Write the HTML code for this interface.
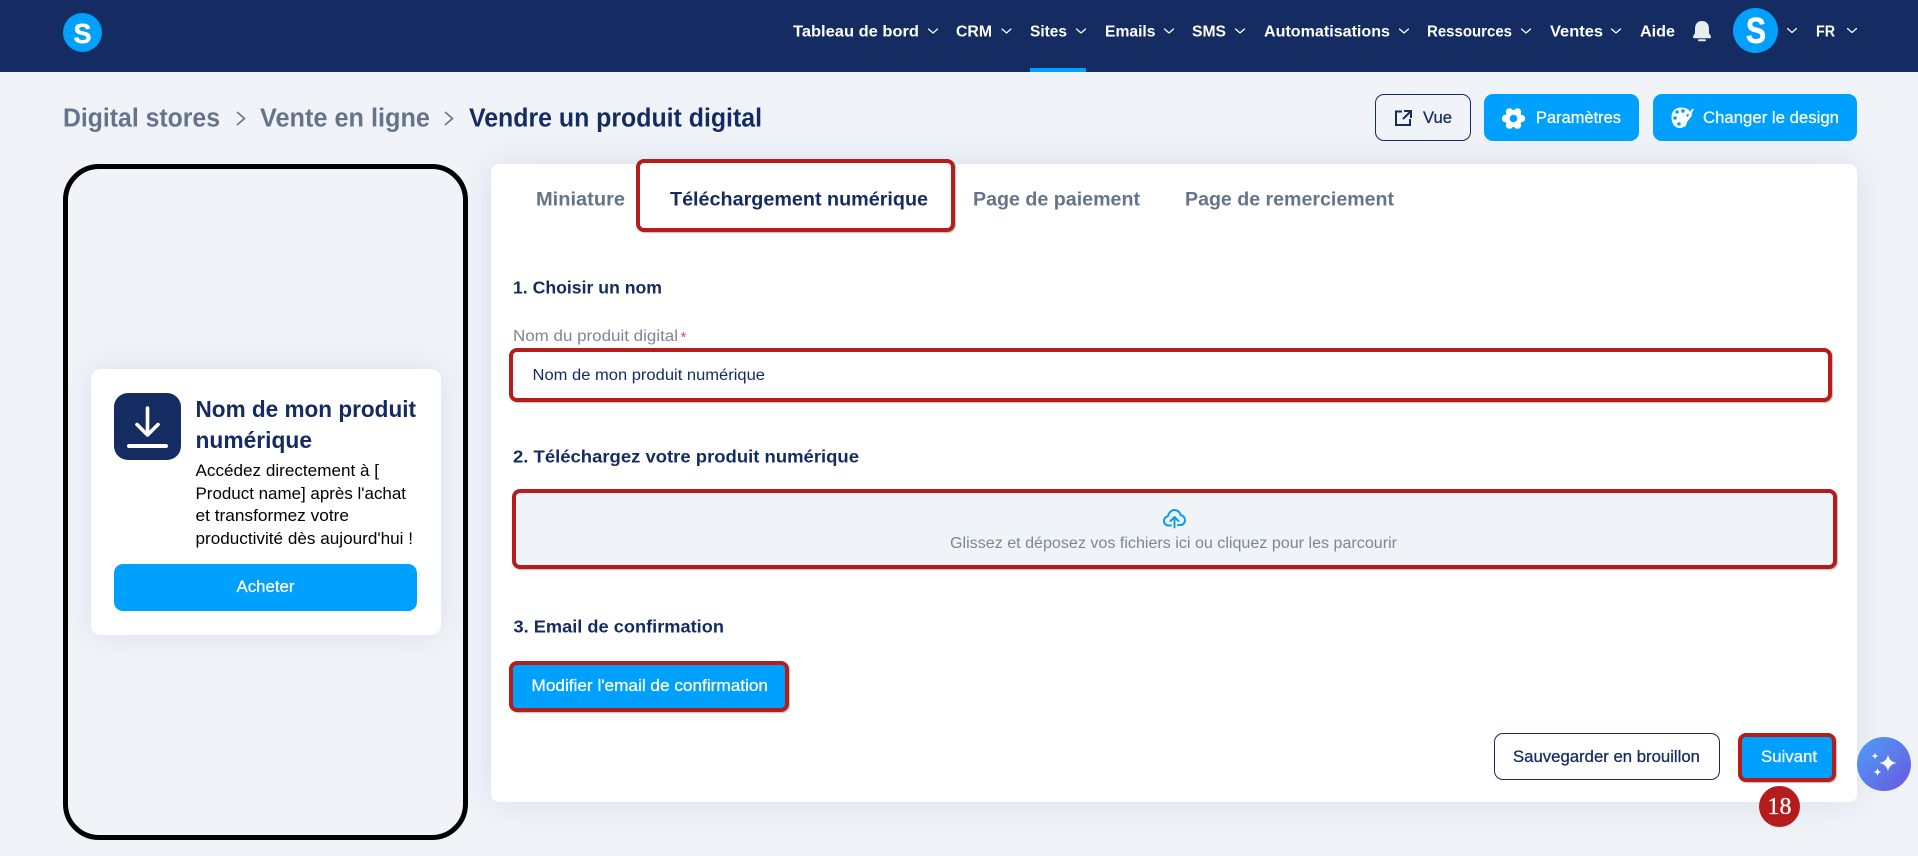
<!DOCTYPE html>
<html lang="fr">
<head>
<meta charset="utf-8">
<title>Vendre un produit digital</title>
<style>
html,body{margin:0;padding:0;width:1918px;height:856px;overflow:hidden;background:#f0f4f9}
body{position:relative;font-family:"Liberation Sans",sans-serif}
.b{position:absolute;box-sizing:border-box}
.red{border:4px solid #b51c1c;border-radius:8px;box-shadow:1px 1px 1px rgba(60,60,60,.35)}
svg.o{position:absolute;left:0;top:0}
text{font-family:"Liberation Sans",sans-serif}
.n{font-size:16px;font-weight:700;fill:#fff}
.t{font-size:19px;font-weight:700;fill:#64748b}
.c{font-size:25.5px;font-weight:700;fill:#64748b}
.h{font-size:17.5px;font-weight:700;fill:#152c62}
.w{font-size:16.5px;fill:#fff;stroke:#fff;stroke-width:.25}
.d{font-size:16.5px;fill:#000}
</style>
</head>
<body>
<div class="b" style="left:0;top:0;width:1918px;height:72px;background:#152c62"></div>
<div class="b" style="left:1030px;top:68px;width:56px;height:4px;background:#00a0ff"></div>
<div class="b" style="left:63px;top:13px;width:39px;height:39px;border-radius:50%;background:#00a0ff"></div>
<div class="b" style="left:1733px;top:8px;width:45px;height:45px;border-radius:50%;background:#00a0ff"></div>

<div class="b" style="left:1375px;top:94px;width:96px;height:47px;border:1px solid #152c62;border-radius:9px"></div>
<div class="b" style="left:1484px;top:94px;width:155px;height:47px;background:#00a0ff;border-radius:9px"></div>
<div class="b" style="left:1653px;top:94px;width:204px;height:47px;background:#00a0ff;border-radius:9px"></div>

<div class="b" style="left:63px;top:164px;width:405px;height:676px;border:5px solid #000;border-radius:36px"></div>
<div class="b" style="left:91px;top:369px;width:350px;height:266px;background:#fff;border-radius:10px;box-shadow:0 0 32px rgba(40,50,80,.1)"></div>
<div class="b" style="left:114px;top:393px;width:67px;height:67px;background:#152c62;border-radius:14px"></div>
<div class="b" style="left:114px;top:564px;width:303px;height:47px;background:#00a0ff;border-radius:9px"></div>

<div class="b" style="left:491px;top:164px;width:1366px;height:638px;background:#fff;border-radius:8px;box-shadow:0 0 36px rgba(40,50,80,.11)"></div>
<div class="b red" style="left:636px;top:159px;width:319px;height:73px;background:#fff"></div>
<div class="b red" style="left:509px;top:348px;width:1323px;height:54px;background:#fff"></div>
<div class="b red" style="left:512px;top:489px;width:1325px;height:80px;background:#f0f4f9"></div>
<div class="b red" style="left:509px;top:661px;width:280px;height:51px;background:#00a0ff"></div>
<div class="b" style="left:1494px;top:733px;width:226px;height:47px;border:1px solid #152c62;border-radius:9px;background:#fff"></div>
<div class="b red" style="left:1738px;top:733px;width:98px;height:49px;background:#00a0ff"></div>
<div class="b" style="left:1758.5px;top:785.5px;width:41px;height:41px;border-radius:50%;background:#b51c1c"></div>
<div class="b" style="left:1857px;top:737px;width:54px;height:54px;border-radius:50%;background:linear-gradient(135deg,#4c9ff5,#6a58e0)"></div>

<svg class="o" width="1918" height="856" viewBox="0 0 1918 856" xmlns="http://www.w3.org/2000/svg">
<!-- logos -->
<text x="73.500" y="43" textLength="18" lengthAdjust="spacingAndGlyphs" style="font-size:28px;font-weight:700" fill="#fff" stroke="#fff" stroke-width=".5">S</text>
<text x="1746" y="43" textLength="20" lengthAdjust="spacingAndGlyphs" style="font-size:36px;font-weight:700" fill="#fff" stroke="#fff" stroke-width=".6">S</text>

<!-- nav -->
<g>
<text class="n" x="793" y="36.500" textLength="126" lengthAdjust="spacingAndGlyphs">Tableau de bord</text>
<text class="n" x="956" y="36.500" textLength="36" lengthAdjust="spacingAndGlyphs">CRM</text>
<text class="n" x="1030" y="36.500" textLength="37" lengthAdjust="spacingAndGlyphs">Sites</text>
<text class="n" x="1105" y="36.500" textLength="50.500" lengthAdjust="spacingAndGlyphs">Emails</text>
<text class="n" x="1192" y="36.500" textLength="34" lengthAdjust="spacingAndGlyphs">SMS</text>
<text class="n" x="1264" y="36.500" textLength="126" lengthAdjust="spacingAndGlyphs">Automatisations</text>
<text class="n" x="1427" y="36.500" textLength="85" lengthAdjust="spacingAndGlyphs">Ressources</text>
<text class="n" x="1550" y="36.500" textLength="53" lengthAdjust="spacingAndGlyphs">Ventes</text>
<text class="n" x="1640" y="36.500" textLength="35" lengthAdjust="spacingAndGlyphs">Aide</text>
<text class="n" x="1816" y="36.500" textLength="19" lengthAdjust="spacingAndGlyphs">FR</text>
</g>
<g fill="none" stroke="#fff" stroke-width="1.200" stroke-linecap="round" stroke-linejoin="round">
<path d="M928.500 29l4.500 4 4.500-4"/><path d="M1002 29l4.500 4 4.500-4"/><path d="M1076.500 29l4.500 4 4.500-4"/>
<path d="M1164.500 29l4.500 4 4.500-4"/><path d="M1235.500 29l4.500 4 4.500-4"/><path d="M1399.500 29l4.500 4 4.500-4"/>
<path d="M1521.500 29l4.500 4 4.500-4"/><path d="M1611.500 29l4.500 4 4.500-4"/><path d="M1787.500 28.500l4.500 4 4.500-4"/>
<path d="M1847.500 28.500l4.500 4 4.500-4"/>
</g>
<path d="M1702 21c-5 0-7 3.500-7 8v3.500c0 1.500-2 3-2 4.500 0 .8.500 1.200 1.200 1.200h15.600c.7 0 1.200-.4 1.200-1.200 0-1.500-2-3-2-4.500V29c0-4.500-2-8-7-8z" fill="#e8ecf0"/>
<rect x="1698" y="39.200" width="8" height="2" rx="1" fill="#e8ecf0"/>

<!-- breadcrumb -->
<text class="c" x="63" y="126.500" textLength="157" lengthAdjust="spacingAndGlyphs">Digital stores</text>
<text class="c" x="260" y="126.500" textLength="170" lengthAdjust="spacingAndGlyphs">Vente en ligne</text>
<text class="c" x="469" y="126.500" textLength="293" lengthAdjust="spacingAndGlyphs" style="fill:#152c62">Vendre un produit digital</text>
<path d="M237 112l7.500 6.500-7.500 6.500M445 112l7.500 6.500-7.500 6.500" fill="none" stroke="#64748b" stroke-width="1.600"/>

<!-- top buttons -->
<text class="w" x="1423" y="123" textLength="29" lengthAdjust="spacingAndGlyphs" style="fill:#152c62;stroke:#152c62">Vue</text>
<text class="w" x="1536" y="123" textLength="85" lengthAdjust="spacingAndGlyphs">Paramètres</text>
<text class="w" x="1703" y="123" textLength="136" lengthAdjust="spacingAndGlyphs">Changer le design</text>
<path d="M1402 111.500h-6v13.500h14v-6M1404 111h7v7M1411 111l-8 8" fill="none" stroke="#152c62" stroke-width="2"/>
<g transform="translate(1513.500 118.500) rotate(90)">
<g fill="#fff"><circle r="8.500"/><circle cy="-8" r="3.700"/><circle cy="8" r="3.700"/><circle cx="6.600" cy="-4" r="3.700"/><circle cx="-6.600" cy="-4" r="3.700"/><circle cx="6.600" cy="4" r="3.700"/><circle cx="-6.600" cy="4" r="3.700"/></g>
<circle r="3.800" fill="#00a0ff"/>
</g>
<g>
<path d="M1681 107.500c6 0 10.500 3 11 8l-6 8c-1 3-3 4.500-6 4.500-5 0-8.500-4-8.500-10.500s4-10 9.500-10z" fill="#fff"/>
<circle cx="1677" cy="112" r="1.800" fill="#00a0ff"/><circle cx="1683" cy="111" r="1.800" fill="#00a0ff"/><circle cx="1675" cy="118" r="1.800" fill="#00a0ff"/><circle cx="1688" cy="115.500" r="1.500" fill="#00a0ff"/><circle cx="1679" cy="124" r="1.800" fill="#00a0ff"/>
<path d="M1693 109l-7 13" stroke="#fff" stroke-width="1.800"/><path d="M1685 122l2 1-2 4-2-1z" fill="#fff"/>
</g>

<!-- preview card -->
<path d="M147.500 408v26M137 424.500l10.500 10.500 10.500-10.500" fill="none" stroke="#fff" stroke-width="3.600" stroke-linecap="round" stroke-linejoin="round"/>
<path d="M129 446h37" stroke="#fff" stroke-width="4" stroke-linecap="round"/>
<g style="font-size:23px;font-weight:700" fill="#152c62">
<text x="195.500" y="417" textLength="220.500" lengthAdjust="spacingAndGlyphs">Nom de mon produit</text>
<text x="195.500" y="448" textLength="116.500" lengthAdjust="spacingAndGlyphs">numérique</text>
</g>
<text class="d" x="195.500" y="476" textLength="183.500" lengthAdjust="spacingAndGlyphs">Accédez directement à [</text>
<text class="d" x="195.500" y="499" textLength="210.500" lengthAdjust="spacingAndGlyphs">Product name] après l'achat</text>
<text class="d" x="195.500" y="521" textLength="153.500" lengthAdjust="spacingAndGlyphs">et transformez votre</text>
<text class="d" x="195.500" y="544" textLength="217.500" lengthAdjust="spacingAndGlyphs">productivité dès aujourd'hui !</text>
<text class="w" x="236.500" y="592" textLength="58" lengthAdjust="spacingAndGlyphs">Acheter</text>

<!-- tabs -->
<text class="t" x="536" y="205.500" textLength="89" lengthAdjust="spacingAndGlyphs">Miniature</text>
<text class="t" x="670" y="205.500" textLength="258" lengthAdjust="spacingAndGlyphs" style="fill:#152c62">Téléchargement numérique</text>
<text class="t" x="973" y="205.500" textLength="167" lengthAdjust="spacingAndGlyphs">Page de paiement</text>
<text class="t" x="1185" y="205.500" textLength="209" lengthAdjust="spacingAndGlyphs">Page de remerciement</text>

<!-- form -->
<text class="h" x="513" y="293.500" textLength="149" lengthAdjust="spacingAndGlyphs">1. Choisir un nom</text>
<text x="513" y="341" textLength="165" lengthAdjust="spacingAndGlyphs" style="font-size:15.500px" fill="#7b8794">Nom du produit digital</text>
<text x="680.500" y="342" style="font-size:15px" fill="#ef4565">*</text>
<text x="532.500" y="380" textLength="232.500" lengthAdjust="spacingAndGlyphs" style="font-size:15.500px" fill="#152c62">Nom de mon produit numérique</text>
<text class="h" x="513" y="462.500" textLength="346" lengthAdjust="spacingAndGlyphs">2. Téléchargez votre produit numérique</text>
<g fill="none" stroke="#0a9bf5" stroke-width="2" stroke-linecap="round" stroke-linejoin="round">
<path d="M1171 525.500h-2.500c-2.500 0-4.500-2-4.500-4.600 0-2.300 1.600-4.200 3.800-4.500 .9-3.500 3.300-6.400 6.700-6.400 3 0 5.500 2.200 6.300 5.300 2.300 .2 4.200 2.400 4.200 5 0 2.600-2 4.700-4.500 4.700h-2.500"/>
<path d="M1174.500 527.500v-10M1170.500 521l4-4 4 4"/>
</g>
<text x="950" y="548" textLength="447" lengthAdjust="spacingAndGlyphs" style="font-size:15.500px" fill="#7b8794">Glissez et déposez vos fichiers ici ou cliquez pour les parcourir</text>
<text class="h" x="513.500" y="632.500" textLength="210.500" lengthAdjust="spacingAndGlyphs">3. Email de confirmation</text>
<text class="w" x="531.500" y="691" textLength="236.500" lengthAdjust="spacingAndGlyphs">Modifier l'email de confirmation</text>

<!-- footer buttons -->
<text class="w" x="1513" y="762" textLength="187" lengthAdjust="spacingAndGlyphs" style="fill:#152c62;stroke:#152c62">Sauvegarder en brouillon</text>
<text class="w" x="1761" y="762" textLength="56" lengthAdjust="spacingAndGlyphs">Suivant</text>
<text x="1779.500" y="814" text-anchor="middle" style="font-family:'Liberation Serif',serif;font-size:24px" fill="#fff" stroke="#fff" stroke-width=".3">18</text>

<!-- AI -->
<path d="M1888 754.500c1 5 3.300 7.300 8.500 8.500-5.200 1.200-7.500 3.500-8.500 8.500-1-5-3.300-7.300-8.500-8.500 5.200-1.200 7.500-3.500 8.500-8.500z" fill="#fff"/>
<path d="M1875 752.500c.5 2.300 1.200 3 3.500 3.500-2.300.5-3 1.200-3.500 3.500-.5-2.300-1.200-3-3.500-3.500 2.300-.5 3-1.200 3.500-3.500z" fill="#fff"/>
<path d="M1877.500 768c.6 2.700 1.400 3.400 4 4-2.600.6-3.400 1.300-4 4-.6-2.700-1.400-3.400-4-4 2.600-.6 3.400-1.300 4-4z" fill="#fff"/>
</svg>
</body>
</html>
